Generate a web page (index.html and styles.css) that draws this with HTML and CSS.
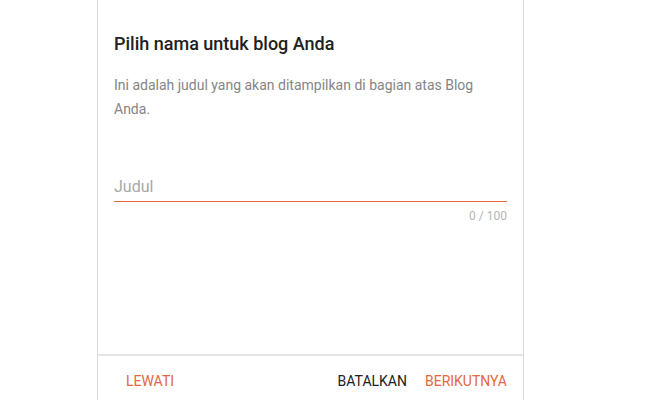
FILE: index.html
```html
<!DOCTYPE html>
<html lang="id">
<head>
<meta charset="utf-8">
<link rel="stylesheet" href="styles.css">
</head>
<body>
<div class="card">
  <div class="content">
    <h2 class="title">Pilih nama untuk blog Anda</h2>
    <p class="desc">Ini adalah judul yang akan ditampilkan di bagian atas Blog Anda.</p>
    <div class="field">
      <div class="input">Judul</div>
      <div class="counter">0 / 100</div>
    </div>
  </div>
  <div class="footer">
    <span class="btn accent">LEWATI</span>
    <span class="spacer"></span>
    <span class="btn dark">BATALKAN</span>
    <span class="btn accent">BERIKUTNYA</span>
  </div>
</div>
</body>
</html>
```
FILE: styles.css
```css
html, body {
  margin: 0;
  padding: 0;
  background: #fff;
  font-family: Roboto, "Noto Sans", sans-serif;
  overflow: hidden;
  height: 400px;
}
.card {
  box-sizing: border-box;
  width: 427px;
  margin: -8px 0 0 97px;
  border: 1px solid #dadada;
  border-radius: 8px;
  background: #fff;
  height: 420px;
}
.content {
  padding: 39px 16px 0 16px;
  height: 361px;
  box-sizing: border-box;
}
.title {
  margin: 0;
  font-size: 18px;
  font-weight: 500;
  color: #212121;
  line-height: 24px;
}
.desc {
  margin: 17px 0 0;
  font-size: 14px;
  line-height: 24px;
  color: #858585;
  padding-right: 20px;
}
.field {
  margin-top: 55px;
}
.input {
  font-size: 16px;
  color: #a8a8a8;
  line-height: 22px;
  padding-bottom: 3px;
  border-bottom: 1px solid #e5673e;
}
.counter {
  text-align: right;
  font-size: 12px;
  line-height: 14px;
  color: #b5b5b5;
  margin-top: 7px;
}
.footer {
  border-top: 2px solid #e4e4e4;
  display: flex;
  align-items: center;
  padding: 15px 16px 0 28px;
}
.spacer { flex: 1; }
.btn {
  font-size: 14px;
  font-weight: 400;
  line-height: 20px;
}
.btn.accent { color: #e5673e; }
.btn.dark { color: #212121; margin-right: 18px; }
```
